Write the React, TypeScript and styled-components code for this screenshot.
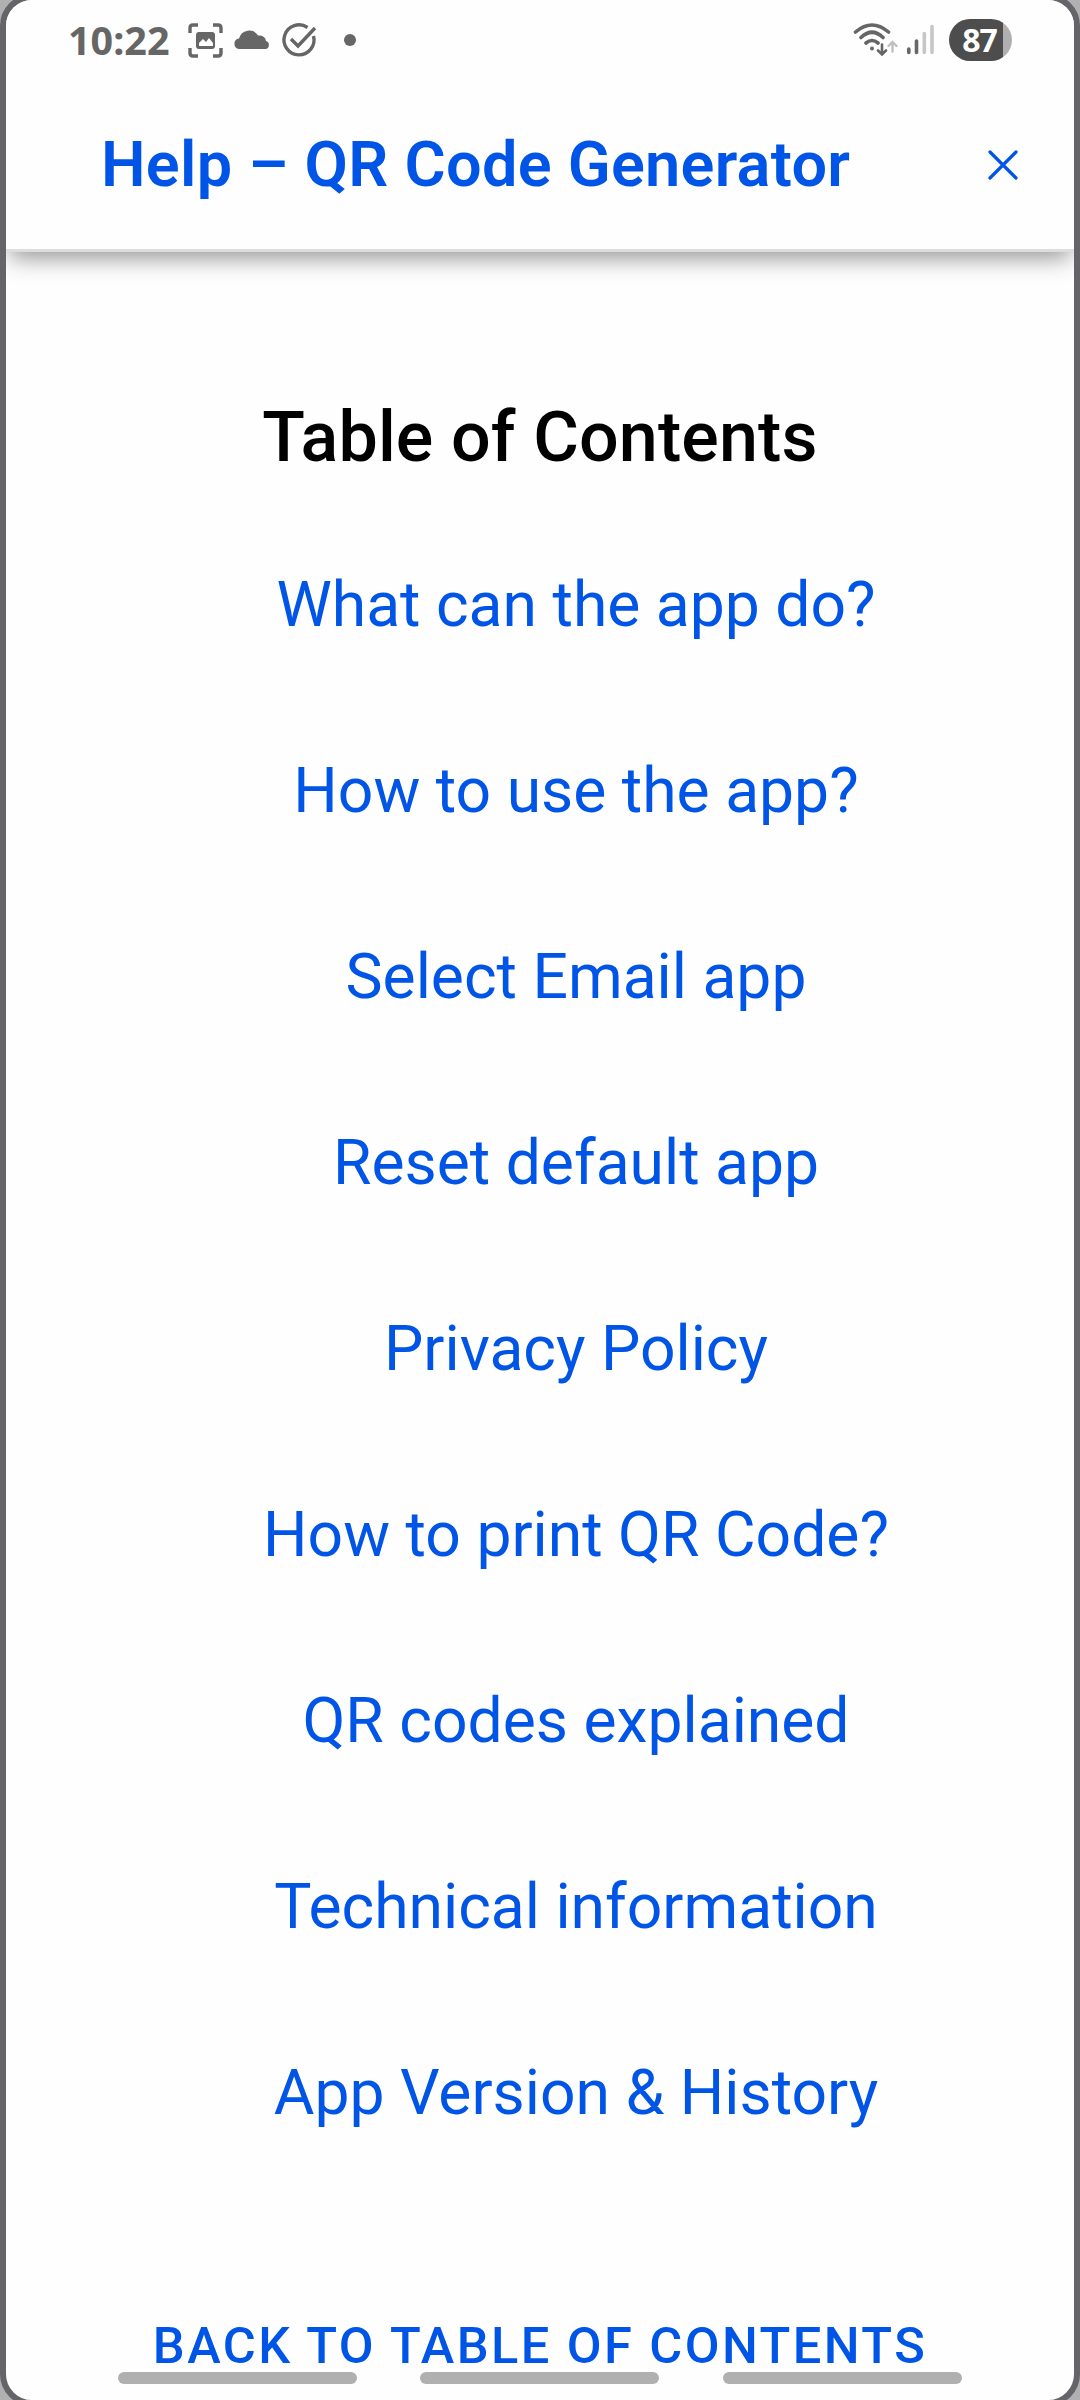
import React from "react";
import styled, { createGlobalStyle } from "styled-components";

const BLUE = "#0055e6";

const Global = createGlobalStyle`
  * { box-sizing: border-box; }
  body { margin: 0; background: #b0b0b0; font-family: Roboto, sans-serif; }
`;

const Shell = styled.div`
  width: 1080px;
  height: 2400px;
  overflow: hidden;
  background: #b0b0b0;
  display: flex;
`;

const Screen = styled.div`
  flex: 1;
  margin: -6px 0;
  border: 6px solid #646469;
  border-radius: 32px;
  background: #fefefe;
  overflow: hidden;
  display: flex;
  flex-direction: column;
  position: relative;
`;

const TopArea = styled.div`
  flex: none;
  background: #fefefe;
  border-bottom: 3px solid #ddd;
  box-shadow: 0 10px 22px -4px rgba(0, 0, 0, 0.42);
`;

const StatusBar = styled.div`
  height: 80px;
  display: flex;
  align-items: center;
  justify-content: space-between;
  padding: 0 62px 0 62px;
  color: #666;
`;

const Group = styled.div`
  display: flex;
  align-items: center;
`;

const Clock = styled.span`
  font: 700 39.5px/40px "Noto Sans", sans-serif;
  width: 118px;
  white-space: nowrap;
`;

const Battery = styled.div`
  width: 63px;
  height: 42px;
  border-radius: 21px;
  margin-left: 14px;
  padding-right: 2px;
  background: linear-gradient(90deg, #4d4d4d 54px, #b0b0b0 54px);
  color: #fff;
  font: 700 32px/41px "Noto Sans", sans-serif;
  letter-spacing: -1px;
  text-align: center;
`;

const Header = styled.header`
  height: 169px;
  display: flex;
  justify-content: space-between;
  padding: 1px 50px 0 95px;
`;

const Title = styled.h1`
  margin: 0;
  font-size: 63px;
  font-weight: 600;
  line-height: 168px;
  letter-spacing: 0.27px;
  color: ${BLUE};
  white-space: nowrap;
`;

const CloseButton = styled.button`
  border: 0;
  padding: 0;
  background: none;
  height: 168px;
  display: flex;
  align-items: center;
`;

const Contents = styled.main`
  flex: 1;
  display: flex;
  flex-direction: column;
  align-items: center;
`;

const Heading = styled.h2`
  margin: 133px 0 0;
  font-size: 70px;
  font-weight: 500;
  line-height: 104px;
  letter-spacing: 0.12px;
  color: #000;
`;

const LinkList = styled.ul`
  list-style: none;
  margin: 23px 0 0;
  padding: 0 0 0 72px;
  align-self: stretch;
`;

const LinkItem = styled.li`
  height: 186px;
  display: flex;
  align-items: center;
  justify-content: center;
`;

const Link = styled.a`
  font-size: 62.4px;
  line-height: 90px;
  color: ${BLUE};
  white-space: nowrap;
`;

const BackLink = styled.a`
  margin-top: 130px;
  font-size: 50.5px;
  font-weight: 500;
  line-height: 60px;
  letter-spacing: 2.45px;
  color: ${BLUE};
  white-space: nowrap;
`;

const NavBars = styled.div`
  position: absolute;
  bottom: 16px;
  left: 0;
  right: 1px;
  display: flex;
  justify-content: center;
  gap: 63.5px;
`;

const NavBar = styled.span`
  width: 239px;
  height: 12px;
  border-radius: 6px;
  background: #b0b0b0;
`;

const links = [
  "What can the app do?",
  "How to use the app?",
  "Select Email app",
  "Reset default app",
  "Privacy Policy",
  "How to print QR Code?",
  "QR codes explained",
  "Technical information",
  "App Version & History",
];

const NotificationIcons = () => (
  <svg width="172" height="40" viewBox="186 20 172 40" fill="none" stroke="#666" strokeWidth="3.4">
    <path d="M190 33V28Q190 25 193 25H198M213 25H218Q221 25 221 28V33M221 48V53Q221 56 218 56H213M198 56H193Q190 56 190 53V48" />
    <rect x="196" y="32" width="19" height="17" rx="3" fill="#666" stroke="none" />
    <path d="M199 46V43L203 39L206 42L209 38L213 43V46Z" fill="#fff" stroke="none" />
    <path d="M239 49A5.3 5.3 0 0 1 239 38.5A10.500 10.500 0 0 1 258 35.500Q265 35 266 41A4.2 4.2 0 0 1 266 49Z" fill="#666" stroke="none" />
    <path d="M307.500 27.500A15 15 0 1 0 313.500 36M291 39L298 46L315 28" />
    <circle cx="350" cy="40" r="6" fill="#666" stroke="none" />
  </svg>
);

const SignalIcons = () => (
  <svg width="83" height="40" viewBox="852 20 83 40" fill="none" stroke="#666" strokeWidth="3.6" strokeLinecap="round">
    <path d="M855.500 32Q872 18 888.500 32M861 37.500Q872 27 883 37.500M866 43Q872 38 878 43" />
    <circle cx="872" cy="48.500" r="2" fill="#666" stroke="none" />
    <path d="M882 44.500V54M878 50.500L882 54.500L886 50.500" strokeWidth="2.6" />
    <path d="M892.500 51.500V42M888.500 46L892.500 42L896.500 46" stroke="#bfbfbf" strokeWidth="2.4" />
    <path d="M908.800 49V52.500M916.500 41V52.500" />
    <path d="M924.300 33.500V52.500M932 26.500V52.500" stroke="#c6c6c6" />
  </svg>
);

export default function App() {
  return (
    <>
      <Global />
      <Shell>
        <Screen>
          <TopArea>
            <StatusBar>
              <Group>
                <Clock>10:22</Clock>
                <NotificationIcons />
              </Group>
              <Group>
                <SignalIcons />
                <Battery>87</Battery>
              </Group>
            </StatusBar>
            <Header>
              <Title>Help – QR Code Generator</Title>
              <CloseButton aria-label="Close">
                <svg width="42" height="42" viewBox="0 0 42 42" fill="none" stroke={BLUE} strokeWidth="3.2" strokeLinecap="round">
                  <path d="M8 8L34 34M34 8L8 34" />
                </svg>
              </CloseButton>
            </Header>
          </TopArea>
          <Contents>
            <Heading>Table of Contents</Heading>
            <LinkList>
              {links.map((label) => (
                <LinkItem key={label}>
                  <Link>{label}</Link>
                </LinkItem>
              ))}
            </LinkList>
            <BackLink>BACK TO TABLE OF CONTENTS</BackLink>
          </Contents>
          <NavBars>
            <NavBar />
            <NavBar />
            <NavBar />
          </NavBars>
        </Screen>
      </Shell>
    </>
  );
}
